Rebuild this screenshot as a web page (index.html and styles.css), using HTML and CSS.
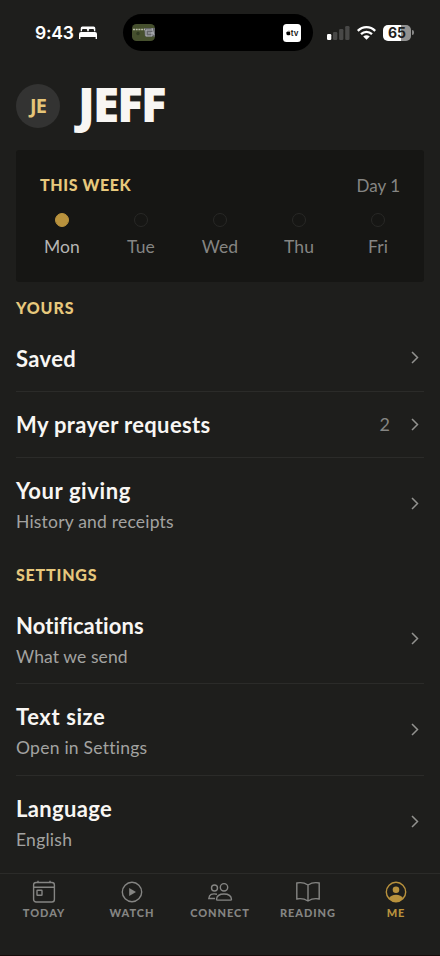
FILE: index.html
```html
<!DOCTYPE html>
<html lang="en">
<head>
<meta charset="utf-8">
<meta name="viewport" content="width=device-width, initial-scale=1">
<title>Me</title>
<link rel="stylesheet" href="styles.css">
</head>
<body>
<div class="app">
  <header class="status">
    <div class="clock">
      <span class="time">9:43</span>
      <svg class="bed" viewBox="0 0 18 13"><path d="M1.700 5.300V2.200Q1.700.5 3.400.5h11.200q1.700 0 1.700 1.700v3.100h-1.300V4q0-1-1-1h-3.200q-1 0-1 1v1.300H8.200V4q0-1-1-1H4q-1 0-1 1v1.300zM2 6h14q2 0 2 2v5h-1.400v-2H1.400v2H0V8q0-2 2-2z" fill="#fff"/></svg>
    </div>
    <div class="island">
      <svg class="art" viewBox="0 0 23 17"><rect width="23" height="17" rx="4.500" fill="#46502e"/><path d="M12 4h11v8.500H13z" fill="#65676a"/><path d="M1 5.500h12" stroke="#b9bbaa" stroke-width="1.500" stroke-dasharray="2 .7"/><path d="M14 6h6M14 6v6h6V8M16 9h5M20 4l2 7" stroke="#c2c4c9" fill="none" stroke-width=".8"/><circle cx="6" cy="9.500" r="1.700" fill="#303a21"/></svg>
      <span class="tv"><svg viewBox="0 0 8 9"><path d="M5.300 0Q5.300 1.600 3.900 1.900 3.900.5 5.300 0zM3.900 2.400Q6 1.500 7 3q-1.700 1.500.3 3.200Q6 9 4 8 2 9 .7 6.500-.5 2.700 2.300 2.200q.8 0 1.600.2z"/></svg>tv</span>
    </div>
    <div class="system">
      <svg class="signal" viewBox="0 0 23 14"><rect y="8" width="4.300" height="6" rx="1.200" fill="#fff"/><g fill="#484847"><rect x="6" y="6" width="4.300" height="8" rx="1.200"/><rect x="12.100" y="3" width="4.300" height="11" rx="1.200"/><rect x="18.200" width="4.300" height="14" rx="1.200"/></g></svg>
      <svg class="wifi" viewBox="0 0 19 14"><g fill="none" stroke="#fff" stroke-width="2.300"><path d="M.8 4.900Q4.500 1.200 9.500 1.200t8.700 3.700"/><path d="M4 8.200q2.400-2.300 5.500-2.300T15 8.200"/></g><path d="M6.200 10.400q3.300-2.500 6.600 0L9.500 13.800z" fill="#fff"/></svg>
      <span class="battery">65</span><i class="nub"></i>
    </div>
  </header>

  <main>
    <div class="profile"><span class="avatar">JE</span><h1>JEFF</h1></div>

    <section class="week">
      <div class="week-head"><h2 class="label week-label">THIS WEEK</h2><span class="day-count">Day 1</span></div>
      <div class="days">
        <div class="day done"><i></i><span>Mon</span></div>
        <div class="day"><i></i><span>Tue</span></div>
        <div class="day"><i></i><span>Wed</span></div>
        <div class="day"><i></i><span>Thu</span></div>
        <div class="day"><i></i><span>Fri</span></div>
      </div>
    </section>

    <h2 class="label yours">YOURS</h2>
    <div class="row"><div class="copy"><h3>Saved</h3></div><svg class="chev" viewBox="0 0 8 13"><path d="M1 1l5.500 5.500L1 12"/></svg></div>
    <div class="row"><div class="copy"><h3>My prayer requests</h3></div><span class="count">2</span><svg class="chev" viewBox="0 0 8 13"><path d="M1 1l5.500 5.500L1 12"/></svg></div>
    <div class="row tall last"><div class="copy"><h3 class="giving">Your giving</h3><p class="history">History and receipts</p></div><svg class="chev" viewBox="0 0 8 13"><path d="M1 1l5.500 5.500L1 12"/></svg></div>

    <h2 class="label settings">SETTINGS</h2>
    <div class="row tall"><div class="copy"><h3 class="notif">Notifications</h3><p class="send">What we send</p></div><svg class="chev" viewBox="0 0 8 13"><path d="M1 1l5.500 5.500L1 12"/></svg></div>
    <div class="row tall"><div class="copy"><h3 class="size">Text size</h3><p>Open in Settings</p></div><svg class="chev" viewBox="0 0 8 13"><path d="M1 1l5.500 5.500L1 12"/></svg></div>
    <div class="row tall last"><div class="copy"><h3>Language</h3><p>English</p></div><svg class="chev" viewBox="0 0 8 13"><path d="M1 1l5.500 5.500L1 12"/></svg></div>
  </main>

  <nav class="tabs">
    <a class="tab"><svg viewBox="0 0 24 24"><rect x="1.600" y="2.500" width="20.800" height="19.500" rx="2.500"/><path d="M1.600 7.300h20.800M6 .8v1.700M18 .8v1.700"/><rect x="5" y="10.300" width="5" height="5" rx=".5"/></svg><span>TODAY</span></a>
    <a class="tab"><svg viewBox="0 0 24 24"><circle cx="12" cy="12" r="9.700"/><path d="M9.200 8v8l6.800-4z" class="solid"/></svg><span>WATCH</span></a>
    <a class="tab"><svg viewBox="0 0 24 24"><circle cx="6.500" cy="8" r="3"/><circle cx="16" cy="7.300" r="3.700"/><path d="M9 14.200Q1.500 12.500.8 18.500H7M8.500 19.300Q9 14 16 14t7.500 5.300q0 .8-1 .8H9.500q-1 0-1-.8z"/></svg><span>CONNECT</span></a>
    <a class="tab"><svg viewBox="0 0 24 24"><path d="M12 5Q7 1.800.8 3v16q6-1.200 11.200 2 5.200-3.200 11.200-2V3Q17 1.800 12 5v16"/></svg><span>READING</span></a>
    <a class="tab active"><svg viewBox="0 0 24 24"><circle cx="12" cy="12" r="9.700"/><circle cx="12" cy="9.700" r="3.300" class="solid"/><path d="M4.800 18.200Q7 14.700 12 14.700t7.200 3.500Q16.500 21.700 12 21.700t-7.200-3.500z" class="solid"/></svg><span>ME</span></a>
  </nav>
</div>
</body>
</html>
```
FILE: styles.css
```css
* { box-sizing: border-box; margin: 0; padding: 0; }
body { background: #1e1e1c; font-family: Lato, "Noto Sans", sans-serif; color: #f8f6f3; }
svg { display: block; overflow: visible; }
.app { width: 440px; height: 956px; display: flex; flex-direction: column; overflow: hidden; border-bottom: 1px solid #160b0a; }

.status { height: 84px; padding: 14px 26px 0 35px; display: flex; align-items: flex-start; }
.clock { width: 88px; height: 37px; display: flex; align-items: center; gap: 5px; font: 600 17.500px Inter, sans-serif; color: #fff; }
.time { width: 39px; letter-spacing: -.2px; }
.bed { width: 18px; height: 13px; }
.island { width: 190px; height: 37px; border-radius: 19px; background: #000; display: flex; align-items: center; justify-content: space-between; padding: 0 12px 0 9px; }
.art { width: 23px; height: 17px; }
.tv { width: 18px; height: 18px; border-radius: 3.500px; background: #fff; color: #111; display: flex; align-items: center; justify-content: center; font: 600 8px/1 Inter, sans-serif; }
.tv svg { width: 5px; height: 6px; }
.system { height: 37px; margin-left: 14px; display: flex; align-items: center; }
.signal { width: 23px; height: 14px; }
.wifi { width: 19px; height: 14px; margin-left: 7px; }
.battery { width: 28px; height: 16px; margin-left: 7px; border-radius: 5px; background: linear-gradient(90deg, #fff 65%, #929291 65%); color: #1e1e1c; font: 700 14px/16px Inter, sans-serif; text-align: center; }
.nub { width: 2px; height: 5px; margin-left: 1px; border-radius: 0 2px 2px 0; background: #878786; }

main { flex: 1; padding: 0 16px; }
.profile { height: 44px; display: flex; align-items: center; gap: 18px; }
.avatar { width: 44px; height: 44px; border-radius: 50%; background: #333332; color: #e5c578; font: 700 20px/44px "Noto Sans", sans-serif; letter-spacing: -.8px; text-align: center; }
h1 { font: 900 47.500px/44px "Noto Sans", sans-serif; letter-spacing: -1.800px; padding-bottom: 4px; }
.week { height: 132px; margin-top: 22px; padding: 23px 24px 0; border-radius: 3px; background: #161614; }
.week-head { display: flex; justify-content: space-between; align-items: center; height: 24px; }
.label { font-size: 16px; line-height: 20px; font-weight: 900; letter-spacing: .9px; color: #e7c87c; }
.week-label { letter-spacing: .6px; }
.day-count { font-size: 17px; color: #858583; }
.days { display: flex; justify-content: space-between; margin: 16px 0 0; }
.day { width: 44px; display: flex; flex-direction: column; align-items: center; gap: 9px; font-size: 17.500px; line-height: 22px; letter-spacing: .1px; color: #858583; }
.day i { width: 14px; height: 14px; border: 1px solid #282826; border-radius: 50%; }
.day.done { color: #b5b5b3; }
.done i { background: #b9923d; border-color: #b9923d; }
.yours { margin-top: 16px; height: 27px; }
.settings { margin-top: 15px; height: 28px; letter-spacing: .8px; }
.row { height: 66.500px; display: flex; align-items: center; border-bottom: 1px solid #2b2b29; }
.tall { height: 91.700px; }
.last { border-bottom: 0; }
.copy { flex: 1; padding-top: 2px; }
.tall .copy { padding-top: 5px; }
h3 { font-size: 22px; line-height: 28px; font-weight: 700; letter-spacing: .35px; }
.giving { letter-spacing: .6px; }
.notif { letter-spacing: .1px; }
.size { letter-spacing: .6px; }
p { margin-top: 4px; font-size: 17.500px; line-height: 26px; letter-spacing: .25px; color: #a3a3a1; }
.history { letter-spacing: .2px; }
.send { letter-spacing: .1px; }
.count { margin-right: 21px; font-size: 18px; color: #858583; }
.chev { width: 8px; height: 13px; margin-right: 5px; fill: none; stroke: #92928f; stroke-width: 1.500; }
.tabs { height: 82px; flex-shrink: 0; border-top: 1px solid #2b2b29; display: flex; }
.tab { flex: 1; display: flex; flex-direction: column; align-items: center; padding-top: 6px; color: #858583; }
.tab svg { width: 24px; height: 24px; fill: none; stroke: currentColor; stroke-width: 1.400; }
.tab .solid { fill: currentColor; stroke: none; }
.tab span { margin-top: 2px; font-size: 11px; line-height: 14px; font-weight: 900; letter-spacing: .95px; white-space: nowrap; }
.active { color: #b9923d; }
```
